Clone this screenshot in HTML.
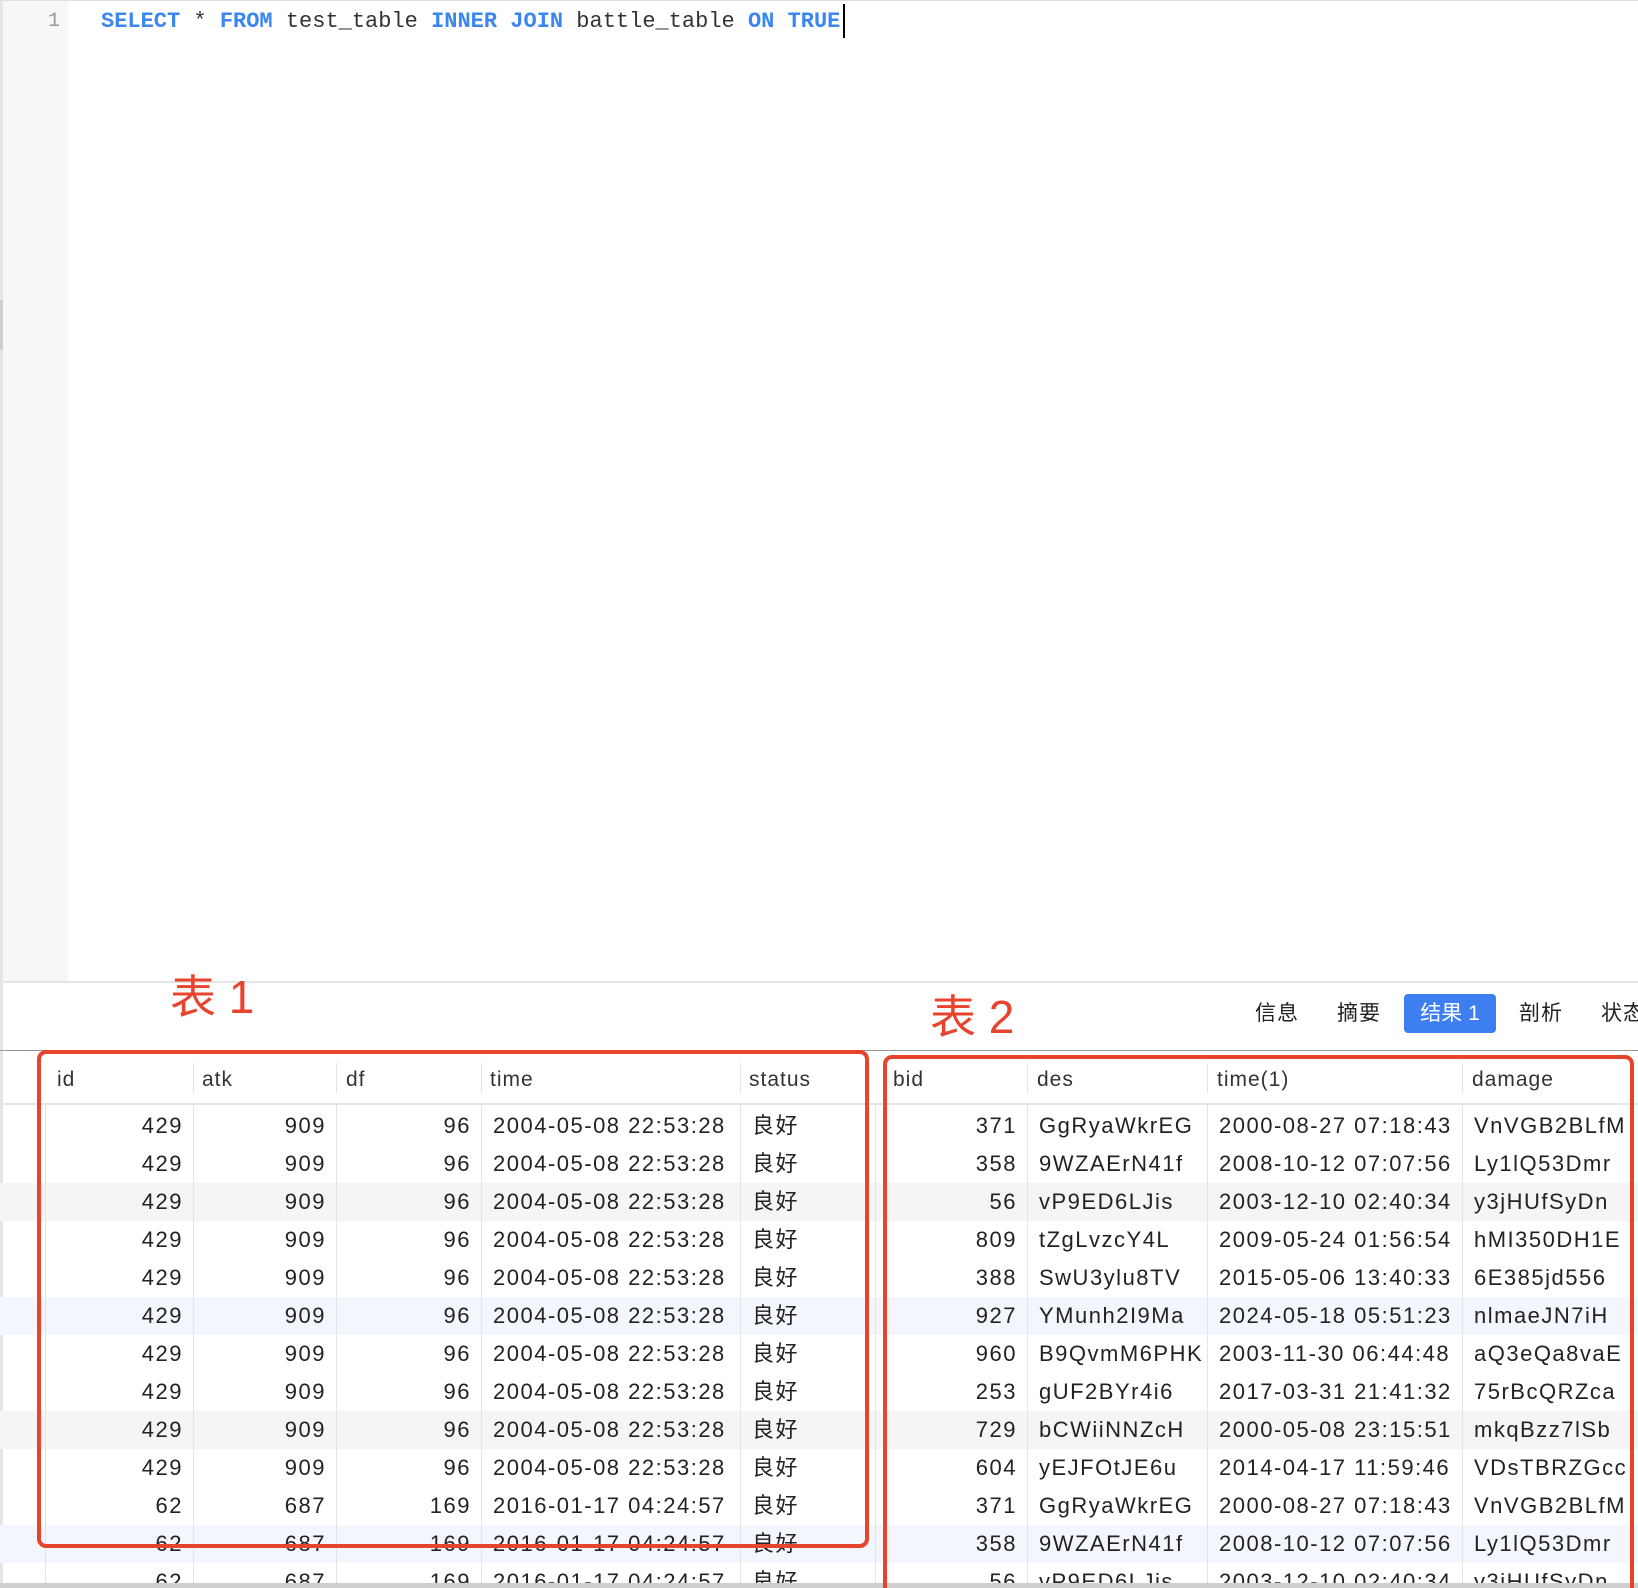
<!DOCTYPE html>
<html style="overflow:hidden;width:1638px;height:1588px"><head><meta charset="utf-8"><style>
*{margin:0;padding:0;box-sizing:border-box}
body{width:1638px;height:1588px;overflow:hidden;background:#fff;position:relative;font-family:"Liberation Sans","Noto Sans CJK SC",sans-serif;color:#222}
.abs{position:absolute}
.code{position:absolute;left:101px;top:8px;font-family:"Liberation Mono",monospace;font-size:22px;line-height:28px;color:#333;white-space:pre}
.kw{color:#3b86f0;font-weight:bold}
.row{position:absolute;left:0;width:1638px;height:38px}
.c{position:absolute;top:0;height:38px;line-height:38px;font-size:22px;letter-spacing:1.5px;white-space:nowrap;overflow:hidden}
.r{text-align:right;padding-right:10px}
.l{text-align:left;padding-left:12px}
.vl{position:absolute;width:1px;background:#e4e4e4}
.h{position:absolute;top:1058px;height:44px;line-height:44px;font-size:21px;letter-spacing:1px;color:#333;white-space:nowrap}
.tab{position:absolute;top:994px;height:39px;line-height:39px;font-size:21px;letter-spacing:1px;color:#222;white-space:nowrap}
.lbl{position:absolute;color:#e8432d;font-size:46px;line-height:50px;white-space:nowrap}
</style></head><body>
<div class="abs" style="left:0;top:0;width:3px;height:982px;background:#e6e6e6"></div>
<div class="abs" style="left:0;top:300px;width:3px;height:50px;background:#cfcfcf"></div>
<div class="abs" style="left:3px;top:0;width:65px;height:982px;background:#f7f7f7"></div>
<div class="abs" style="left:0;top:0;width:1638px;height:1px;background:#e0e0e0"></div>
<div class="abs" style="left:48px;top:8px;font-family:'Liberation Mono',monospace;font-size:20px;line-height:28px;color:#999">1</div>
<div class="code"><span class="kw">SELECT</span> * <span class="kw">FROM</span> test_table <span class="kw">INNER</span> <span class="kw">JOIN</span> battle_table <span class="kw">ON</span> <span class="kw">TRUE</span></div>
<div class="abs" style="left:843px;top:4px;width:2px;height:34px;background:#000"></div>
<div class="abs" style="left:0;top:981px;width:1638px;height:2px;background:#e6e6e6"></div>
<div class="abs" style="left:0;top:983px;width:3px;height:605px;background:#e6e6e6"></div>

<div class="tab" style="left:1255px">信息</div>
<div class="tab" style="left:1337px">摘要</div>
<div class="tab" style="left:1404px;width:92px;background:#3d7ff0;color:#fff;border-radius:4px;text-align:center;letter-spacing:0">结果 1</div>
<div class="tab" style="left:1519px">剖析</div>
<div class="tab" style="left:1601px">状态</div>
<div class="abs" style="left:0;top:1050px;width:1638px;height:1px;background:#999"></div>

<div class="lbl" style="left:170px;top:972px">表 1</div>
<div class="lbl" style="left:930px;top:992px">表 2</div>

<div class="h" style="left:57px">id</div>
<div class="h" style="left:202px">atk</div>
<div class="h" style="left:346px">df</div>
<div class="h" style="left:490px">time</div>
<div class="h" style="left:749px">status</div>
<div class="h" style="left:893px">bid</div>
<div class="h" style="left:1037px">des</div>
<div class="h" style="left:1217px">time(1)</div>
<div class="h" style="left:1472px">damage</div>
<div class="abs" style="left:0;top:1103px;width:1638px;height:2px;background:#e6e6e6"></div>

<div class="abs" style="left:0;top:1183px;width:1638px;height:38px;background:#f5f5f5"></div>
<div class="abs" style="left:0;top:1297px;width:1638px;height:38px;background:#f3f6fc"></div>
<div class="abs" style="left:0;top:1411px;width:1638px;height:38px;background:#f5f5f5"></div>
<div class="abs" style="left:0;top:1525px;width:1638px;height:38px;background:#f3f6fc"></div>

<div class="vl" style="left:193px;top:1063px;height:30px"></div>
<div class="vl" style="left:336px;top:1063px;height:30px"></div>
<div class="vl" style="left:481px;top:1063px;height:30px"></div>
<div class="vl" style="left:740px;top:1063px;height:30px"></div>
<div class="vl" style="left:1027px;top:1063px;height:30px"></div>
<div class="vl" style="left:1207px;top:1063px;height:30px"></div>
<div class="vl" style="left:1462px;top:1063px;height:30px"></div>
<div class="vl" style="left:45px;top:1105px;height:483px"></div>
<div class="vl" style="left:193px;top:1105px;height:483px"></div>
<div class="vl" style="left:336px;top:1105px;height:483px"></div>
<div class="vl" style="left:481px;top:1105px;height:483px"></div>
<div class="vl" style="left:740px;top:1105px;height:483px"></div>
<div class="vl" style="left:875px;top:1105px;height:483px"></div>
<div class="vl" style="left:1027px;top:1105px;height:483px"></div>
<div class="vl" style="left:1207px;top:1105px;height:483px"></div>
<div class="vl" style="left:1462px;top:1105px;height:483px"></div>

<div class="row" style="top:1107px"><div class="c r" style="left:45px;width:148px">429</div><div class="c r" style="left:193px;width:143px">909</div><div class="c r" style="left:336px;width:145px">96</div><div class="c l" style="left:481px;width:259px">2004-05-08 22:53:28</div><div class="c l" style="left:740px;width:135px">良好</div><div class="c r" style="left:883px;width:144px">371</div><div class="c l" style="left:1027px;width:180px">GgRyaWkrEG</div><div class="c l" style="left:1207px;width:255px">2000-08-27 07:18:43</div><div class="c l" style="left:1462px;width:176px">VnVGB2BLfM</div></div>
<div class="row" style="top:1145px"><div class="c r" style="left:45px;width:148px">429</div><div class="c r" style="left:193px;width:143px">909</div><div class="c r" style="left:336px;width:145px">96</div><div class="c l" style="left:481px;width:259px">2004-05-08 22:53:28</div><div class="c l" style="left:740px;width:135px">良好</div><div class="c r" style="left:883px;width:144px">358</div><div class="c l" style="left:1027px;width:180px">9WZAErN41f</div><div class="c l" style="left:1207px;width:255px">2008-10-12 07:07:56</div><div class="c l" style="left:1462px;width:176px">Ly1lQ53Dmr</div></div>
<div class="row" style="top:1183px"><div class="c r" style="left:45px;width:148px">429</div><div class="c r" style="left:193px;width:143px">909</div><div class="c r" style="left:336px;width:145px">96</div><div class="c l" style="left:481px;width:259px">2004-05-08 22:53:28</div><div class="c l" style="left:740px;width:135px">良好</div><div class="c r" style="left:883px;width:144px">56</div><div class="c l" style="left:1027px;width:180px">vP9ED6LJis</div><div class="c l" style="left:1207px;width:255px">2003-12-10 02:40:34</div><div class="c l" style="left:1462px;width:176px">y3jHUfSyDn</div></div>
<div class="row" style="top:1221px"><div class="c r" style="left:45px;width:148px">429</div><div class="c r" style="left:193px;width:143px">909</div><div class="c r" style="left:336px;width:145px">96</div><div class="c l" style="left:481px;width:259px">2004-05-08 22:53:28</div><div class="c l" style="left:740px;width:135px">良好</div><div class="c r" style="left:883px;width:144px">809</div><div class="c l" style="left:1027px;width:180px">tZgLvzcY4L</div><div class="c l" style="left:1207px;width:255px">2009-05-24 01:56:54</div><div class="c l" style="left:1462px;width:176px">hMI350DH1E</div></div>
<div class="row" style="top:1259px"><div class="c r" style="left:45px;width:148px">429</div><div class="c r" style="left:193px;width:143px">909</div><div class="c r" style="left:336px;width:145px">96</div><div class="c l" style="left:481px;width:259px">2004-05-08 22:53:28</div><div class="c l" style="left:740px;width:135px">良好</div><div class="c r" style="left:883px;width:144px">388</div><div class="c l" style="left:1027px;width:180px">SwU3ylu8TV</div><div class="c l" style="left:1207px;width:255px">2015-05-06 13:40:33</div><div class="c l" style="left:1462px;width:176px">6E385jd556</div></div>
<div class="row" style="top:1297px"><div class="c r" style="left:45px;width:148px">429</div><div class="c r" style="left:193px;width:143px">909</div><div class="c r" style="left:336px;width:145px">96</div><div class="c l" style="left:481px;width:259px">2004-05-08 22:53:28</div><div class="c l" style="left:740px;width:135px">良好</div><div class="c r" style="left:883px;width:144px">927</div><div class="c l" style="left:1027px;width:180px">YMunh2I9Ma</div><div class="c l" style="left:1207px;width:255px">2024-05-18 05:51:23</div><div class="c l" style="left:1462px;width:176px">nlmaeJN7iH</div></div>
<div class="row" style="top:1335px"><div class="c r" style="left:45px;width:148px">429</div><div class="c r" style="left:193px;width:143px">909</div><div class="c r" style="left:336px;width:145px">96</div><div class="c l" style="left:481px;width:259px">2004-05-08 22:53:28</div><div class="c l" style="left:740px;width:135px">良好</div><div class="c r" style="left:883px;width:144px">960</div><div class="c l" style="left:1027px;width:180px">B9QvmM6PHK</div><div class="c l" style="left:1207px;width:255px">2003-11-30 06:44:48</div><div class="c l" style="left:1462px;width:176px">aQ3eQa8vaE</div></div>
<div class="row" style="top:1373px"><div class="c r" style="left:45px;width:148px">429</div><div class="c r" style="left:193px;width:143px">909</div><div class="c r" style="left:336px;width:145px">96</div><div class="c l" style="left:481px;width:259px">2004-05-08 22:53:28</div><div class="c l" style="left:740px;width:135px">良好</div><div class="c r" style="left:883px;width:144px">253</div><div class="c l" style="left:1027px;width:180px">gUF2BYr4i6</div><div class="c l" style="left:1207px;width:255px">2017-03-31 21:41:32</div><div class="c l" style="left:1462px;width:176px">75rBcQRZca</div></div>
<div class="row" style="top:1411px"><div class="c r" style="left:45px;width:148px">429</div><div class="c r" style="left:193px;width:143px">909</div><div class="c r" style="left:336px;width:145px">96</div><div class="c l" style="left:481px;width:259px">2004-05-08 22:53:28</div><div class="c l" style="left:740px;width:135px">良好</div><div class="c r" style="left:883px;width:144px">729</div><div class="c l" style="left:1027px;width:180px">bCWiiNNZcH</div><div class="c l" style="left:1207px;width:255px">2000-05-08 23:15:51</div><div class="c l" style="left:1462px;width:176px">mkqBzz7lSb</div></div>
<div class="row" style="top:1449px"><div class="c r" style="left:45px;width:148px">429</div><div class="c r" style="left:193px;width:143px">909</div><div class="c r" style="left:336px;width:145px">96</div><div class="c l" style="left:481px;width:259px">2004-05-08 22:53:28</div><div class="c l" style="left:740px;width:135px">良好</div><div class="c r" style="left:883px;width:144px">604</div><div class="c l" style="left:1027px;width:180px">yEJFOtJE6u</div><div class="c l" style="left:1207px;width:255px">2014-04-17 11:59:46</div><div class="c l" style="left:1462px;width:176px">VDsTBRZGcc</div></div>
<div class="row" style="top:1487px"><div class="c r" style="left:45px;width:148px">62</div><div class="c r" style="left:193px;width:143px">687</div><div class="c r" style="left:336px;width:145px">169</div><div class="c l" style="left:481px;width:259px">2016-01-17 04:24:57</div><div class="c l" style="left:740px;width:135px">良好</div><div class="c r" style="left:883px;width:144px">371</div><div class="c l" style="left:1027px;width:180px">GgRyaWkrEG</div><div class="c l" style="left:1207px;width:255px">2000-08-27 07:18:43</div><div class="c l" style="left:1462px;width:176px">VnVGB2BLfM</div></div>
<div class="row" style="top:1525px"><div class="c r" style="left:45px;width:148px">62</div><div class="c r" style="left:193px;width:143px">687</div><div class="c r" style="left:336px;width:145px">169</div><div class="c l" style="left:481px;width:259px">2016-01-17 04:24:57</div><div class="c l" style="left:740px;width:135px">良好</div><div class="c r" style="left:883px;width:144px">358</div><div class="c l" style="left:1027px;width:180px">9WZAErN41f</div><div class="c l" style="left:1207px;width:255px">2008-10-12 07:07:56</div><div class="c l" style="left:1462px;width:176px">Ly1lQ53Dmr</div></div>
<div class="row" style="top:1563px"><div class="c r" style="left:45px;width:148px">62</div><div class="c r" style="left:193px;width:143px">687</div><div class="c r" style="left:336px;width:145px">169</div><div class="c l" style="left:481px;width:259px">2016-01-17 04:24:57</div><div class="c l" style="left:740px;width:135px">良好</div><div class="c r" style="left:883px;width:144px">56</div><div class="c l" style="left:1027px;width:180px">vP9ED6LJis</div><div class="c l" style="left:1207px;width:255px">2003-12-10 02:40:34</div><div class="c l" style="left:1462px;width:176px">y3jHUfSyDn</div></div>

<div class="abs" style="left:0;top:1583px;width:1638px;height:5px;background:#cfcfcf"></div>

<div class="abs" style="left:37px;top:1050px;width:832px;height:498px;border:4px solid #e8432d;border-radius:9px"></div>
<div class="abs" style="left:883px;top:1055px;width:751px;height:533px;border:4px solid #e8432d;border-bottom:none;border-radius:9px 9px 0 0"></div>
</body></html>
